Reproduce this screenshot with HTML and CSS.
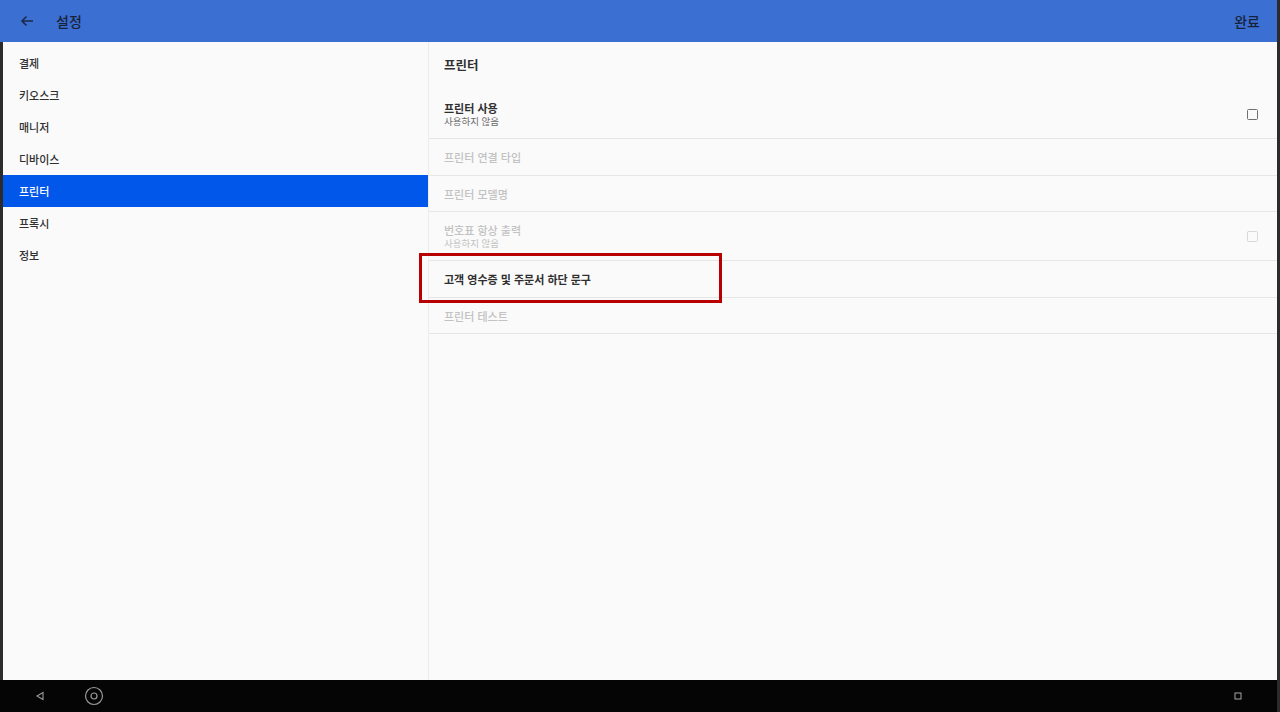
FILE: index.html
```html
<!DOCTYPE html>
<html lang="ko">
<head>
<meta charset="utf-8">
<link rel="stylesheet" href="styles.css">
</head>
<body>
<div class="screen">
  <header class="appbar">
    <div class="appbar-left">
      <svg class="back" width="14" height="12" viewBox="0 0 14 12"><path d="M13 6H2M6.5 1.5L2 6l4.5 4.5" fill="none" stroke="#1c2b4a" stroke-width="1.6"/></svg>
      <span class="title">설정</span>
    </div>
    <span class="done">완료</span>
  </header>
  <main class="content">
    <nav class="sidebar">
      <div class="nav-item">결제</div>
      <div class="nav-item">키오스크</div>
      <div class="nav-item">매니저</div>
      <div class="nav-item">디바이스</div>
      <div class="nav-item active">프린터</div>
      <div class="nav-item">프록시</div>
      <div class="nav-item">정보</div>
    </nav>
    <section class="detail">
      <div class="section-title">프린터</div>
      <div class="row row-first">
        <div class="texts">
          <div class="row-title">프린터 사용</div>
          <div class="row-sub">사용하지 않음</div>
        </div>
        <span class="checkbox"></span>
      </div>
      <div class="row disabled"><div class="row-title">프린터 연결 타입</div></div>
      <div class="row row-short disabled"><div class="row-title">프린터 모델명</div></div>
      <div class="row row-two disabled">
        <div class="texts">
          <div class="row-title">번호표 항상 출력</div>
          <div class="row-sub">사용하지 않음</div>
        </div>
        <span class="checkbox"></span>
      </div>
      <div class="row">
        <div class="row-title">고객 영수증 및 주문서 하단 문구</div>
        <span class="highlight"></span>
      </div>
      <div class="row row-short disabled"><div class="row-title">프린터 테스트</div></div>
    </section>
  </main>
  <footer class="navbar">
    <div class="nav-left">
      <svg class="nav-back" width="10" height="10" viewBox="0 0 10 10"><path d="M8 1.5L2 5l6 3.5z" fill="none" stroke="#9a9a9a" stroke-width="1.1"/></svg>
      <svg class="nav-home" width="20" height="20" viewBox="0 0 20 20"><circle cx="10" cy="10" r="8.5" fill="none" stroke="#9a9a9a" stroke-width="1.2"/><circle cx="10" cy="10" r="3" fill="none" stroke="#9a9a9a" stroke-width="1.2"/></svg>
    </div>
    <svg class="nav-recent" width="8" height="8" viewBox="0 0 8 8"><rect x="1" y="1" width="6" height="6" fill="none" stroke="#9a9a9a" stroke-width="1.1"/></svg>
  </footer>
</div>
</body>
</html>
```

FILE: styles.css
```css
html, body {
  margin: 0;
  padding: 0;
}
body {
  width: 1280px;
  height: 712px;
  overflow: hidden;
  background: #2b2b2b;
  font-family: "Noto Sans CJK KR", "Noto Sans", sans-serif;
}
.screen {
  width: 1280px;
  height: 712px;
  display: flex;
  flex-direction: column;
}
.appbar {
  height: 42px;
  margin-right: 3px;
  background: #3b6fd2;
  display: flex;
  align-items: center;
  justify-content: space-between;
  box-sizing: border-box;
  padding: 0 17px 0 20px;
  flex-shrink: 0;
}
.appbar-left {
  display: flex;
  align-items: center;
}
.back {
  margin-right: 22px;
}
.title,
.done {
  font-size: 14px;
  color: #18233b;
  font-weight: 500;
}
.content {
  flex: 1;
  display: flex;
  margin: 0 3px 0 3px;
  background: #fafafa;
  min-height: 0;
}
.sidebar {
  width: 425px;
  border-right: 1px solid #ececec;
  padding-top: 5px;
  flex-shrink: 0;
}
.nav-item {
  height: 32px;
  line-height: 32px;
  padding-left: 16px;
  font-size: 11px;
  color: #303030;
  font-weight: 500;
}
.nav-item.active {
  background: #0057ea;
  color: #ffffff;
}
.detail {
  flex: 1;
}
.section-title {
  height: 42px;
  line-height: 46px;
  padding-left: 15px;
  font-size: 12.5px;
  font-weight: 700;
  color: #2f2f2f;
}
.row {
  position: relative;
  height: 36px;
  border-bottom: 1px solid #e6e6e6;
  display: flex;
  align-items: center;
  justify-content: space-between;
  padding: 0 19px 0 15px;
}
.row-short {
  height: 35px;
}
.row-two {
  height: 48px;
}
.row-first {
  height: 55px;
  padding-top: 6px;
  box-sizing: border-box;
}
.row-title {
  font-size: 11px;
  color: #2f2f2f;
  font-weight: 700;
  line-height: 14px;
}
.row-sub {
  font-size: 9.5px;
  color: #6a6a6a;
  line-height: 13px;
}
.disabled .row-title {
  color: #c2c2c2;
  font-weight: 500;
}
.disabled .row-sub {
  color: #c2c2c2;
}
.checkbox {
  width: 9px;
  height: 9px;
  border: 1.5px solid #707070;
  border-radius: 1.5px;
}
.disabled .checkbox {
  border-color: #d8d8d8;
}
.highlight {
  position: absolute;
  left: -10px;
  top: -8px;
  width: 297px;
  height: 44px;
  border: 3px solid #b90000;
}
.navbar {
  height: 32px;
  background: #050505;
  margin-right: 3px;
  display: flex;
  align-items: center;
  justify-content: space-between;
  padding: 0 35px 0 35px;
  flex-shrink: 0;
}
.nav-left {
  display: flex;
  align-items: center;
}
.nav-home {
  margin-left: 39px;
}
```
